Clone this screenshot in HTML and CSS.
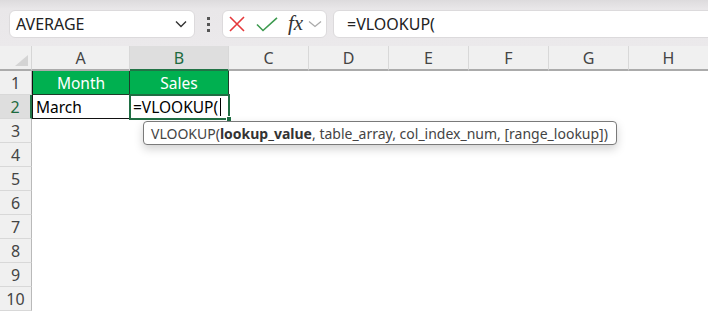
FILE: index.html
```html
<!DOCTYPE html>
<html lang="en">
<head>
  <meta charset="UTF-8">
  <title>VLOOKUP</title>
  <link rel="stylesheet" href="styles.css">
</head>
<body>
  <div class="toolbar">
    <div class="name-box">
      <span>AVERAGE</span>
      <svg width="12" height="8" viewBox="0 0 12 8"><polyline points="1,1.5 6,6.5 11,1.5" fill="none" stroke="#333" stroke-width="1.4"/></svg>
    </div>
    <div class="dots"><i></i><i></i><i></i></div>
    <div class="fx-box">
      <svg class="icon-x" width="16" height="16" viewBox="0 0 16 16"><path d="M1 1 L15 15 M15 1 L1 15" stroke="#e5383b" stroke-width="1.6" fill="none"/></svg>
      <svg class="icon-check" width="22" height="15" viewBox="0 0 22 15"><polyline points="1,7.5 7,13.5 21,0.8" fill="none" stroke="#3d9a4f" stroke-width="1.6"/></svg>
      <span class="fx">fx</span>
      <svg width="14" height="8" viewBox="0 0 14 8"><polyline points="1,1.5 7,6.5 13,1.5" fill="none" stroke="#aaa" stroke-width="1.3"/></svg>
    </div>
    <div class="formula-box">=VLOOKUP(</div>
  </div>

  <div class="sheet">
    <div class="corner"><span class="tri"></span></div>
    <div class="col-head">A</div>
    <div class="col-head active">B</div>
    <div class="col-head">C</div>
    <div class="col-head">D</div>
    <div class="col-head">E</div>
    <div class="col-head">F</div>
    <div class="col-head">G</div>
    <div class="col-head">H</div>

    <div class="row-head">1</div>
    <div class="cell head-cell first">Month</div>
    <div class="cell head-cell">Sales</div>
    <div class="cell blank span6"></div>

    <div class="row-head active">2</div>
    <div class="cell data first">March</div>
    <div class="cell data editing">=VLOOKUP(<span class="caret"></span><span class="handle"></span></div>
    <div class="cell blank span6"></div>

    <div class="row-head">3</div><div class="cell blank span8"></div>
    <div class="row-head">4</div><div class="cell blank span8"></div>
    <div class="row-head">5</div><div class="cell blank span8"></div>
    <div class="row-head">6</div><div class="cell blank span8"></div>
    <div class="row-head">7</div><div class="cell blank span8"></div>
    <div class="row-head">8</div><div class="cell blank span8"></div>
    <div class="row-head">9</div><div class="cell blank span8"></div>
    <div class="row-head">10</div><div class="cell blank span8"></div>

    <div class="tooltip">VLOOKUP(<b>lookup_value</b>, table_array, col_index_num, [range_lookup])</div>
  </div>
</body>
</html>
```

FILE: styles.css
```css
* {
  box-sizing: border-box;
}
body {
  margin: 0;
  width: 708px;
  height: 311px;
  overflow: hidden;
  font-family: 'Noto Sans', 'Open Sans', sans-serif;
  color: #333;
  background: #fff;
}
.toolbar {
  height: 46px;
  display: flex;
  align-items: flex-start;
  padding-top: 10px;
  padding-left: 9px;
  background: linear-gradient(#dddbdd 0px, #e9e7e9 9px, #ebe9eb 46px);
}
.name-box, .fx-box, .formula-box {
  height: 28px;
  background: #fff;
  border: 1px solid #dcdadc;
  border-radius: 6px;
  display: flex;
  align-items: center;
}
.name-box {
  width: 186px;
  padding: 0 7px 0 6px;
  justify-content: space-between;
  font-size: 16px;
  color: #222;
}
.dots {
  width: 27px;
  height: 28px;
  display: flex;
  flex-direction: column;
  align-items: center;
  justify-content: center;
  gap: 3px;
}
.dots i {
  display: block;
  width: 3px;
  height: 3px;
  background: #555;
}
.fx-box {
  width: 105px;
  padding-left: 6px;
}
.icon-x {
  margin-right: 11px;
}
.icon-check {
  margin-right: 10px;
}
.fx {
  font-family: 'Liberation Serif', 'Times New Roman', serif;
  font-style: italic;
  font-size: 21px;
  color: #333;
  margin-right: 5px;
  margin-top: -2px;
}
.formula-box {
  flex: 1;
  margin-left: 6px;
  margin-right: -12px;
  padding-left: 13px;
  font-size: 16px;
  color: #222;
}
.sheet {
  position: relative;
  display: grid;
  grid-template-columns: 32px 98px 99px 80px 80px 80px 80px 80px 80px;
  grid-template-rows: 25px repeat(10, 24px);
}
.corner {
  position: relative;
  background: #f0f0f0;
  border-right: 1px solid #d6d6d6;
  border-bottom: 2px solid #ababab;
}
.tri {
  position: absolute;
  right: 3px;
  bottom: 3px;
  width: 0;
  height: 0;
  border-left: 13px solid transparent;
  border-bottom: 11px solid #d4d4d4;
}
.col-head {
  background: #f0f0f0;
  border-right: 1px solid #d8d8d8;
  border-bottom: 2px solid #ababab;
  display: flex;
  align-items: center;
  justify-content: center;
  font-size: 16px;
  color: #444;
}
.col-head.active {
  background: #dedede;
  border-bottom-color: #217346;
  color: #1d6a3f;
}
.row-head {
  background: #f0f0f0;
  border-right: 1px solid #b9b9b9;
  border-bottom: 1px solid #d8d8d8;
  display: flex;
  align-items: center;
  justify-content: center;
  font-size: 16px;
  color: #444;
}
.row-head.active {
  background: #dedede;
  border-right: 2px solid #217346;
  color: #1d6a3f;
}
.cell {
  font-size: 15.5px;
  display: flex;
  align-items: center;
}
.span6 {
  grid-column: span 6;
}
.span8 {
  grid-column: span 8;
}
.head-cell {
  background: #00b050;
  color: #fff;
  justify-content: center;
  border-right: 1px solid #1f3b2a;
  border-bottom: 1px solid #1f3b2a;
}
.data {
  color: #000;
  padding-left: 3px;
  border-right: 1px solid #111;
  border-bottom: 1px solid #111;
}
.first {
  border-left: 1px solid #111;
}
.editing {
  position: relative;
  outline: 2px solid #1f6e43;
  outline-offset: -1px;
  padding-left: 3px;
}
.caret {
  display: inline-block;
  width: 1px;
  height: 18px;
  background: #000;
  margin-left: 2px;
}
.handle {
  position: absolute;
  right: -4px;
  bottom: -4px;
  width: 6px;
  height: 6px;
  background: #1f6e43;
  border: 1px solid #fff;
}
.tooltip {
  position: absolute;
  left: 143px;
  top: 75px;
  width: 474px;
  height: 24px;
  background: #fff;
  border: 1px solid #7a7a7a;
  border-radius: 4px;
  box-shadow: 0 4px 10px rgba(0, 0, 0, 0.18);
  padding-left: 7px;
  display: flex;
  align-items: center;
  font-size: 14px;
  color: #444;
  white-space: nowrap;
}
.tooltip b {
  color: #333;
}
```
